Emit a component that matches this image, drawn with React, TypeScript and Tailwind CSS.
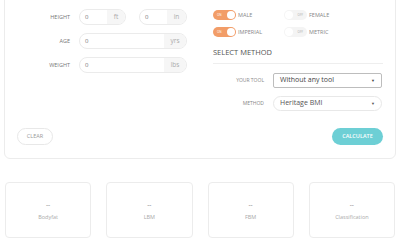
import React from 'react';

function Toggle({ on }: { on: boolean }) {
  if (on) {
    return (
      <div className="relative w-[23px] h-[10px] rounded-full bg-[#f29d68] flex items-center">
        <span className="ml-[4px] text-[3px] text-white leading-none">ON</span>
        <span className="absolute right-[1px] top-[1px] w-[8px] h-[8px] rounded-full bg-white" />
      </div>
    );
  }
  return (
    <div className="relative w-[23px] h-[10px] rounded-full bg-[#f4f4f4] flex items-center justify-end">
      <span className="mr-[4px] text-[3px] text-[#aaa] leading-none">OFF</span>
      <span className="absolute left-[1px] top-[1px] w-[8px] h-[8px] rounded-full bg-white" />
    </div>
  );
}

function AddonInput({ unit, width, addonWidth }: { unit: string; width: string; addonWidth: string }) {
  return (
    <div className={`flex h-[16px] rounded-full border border-[#ebebeb] overflow-hidden ${width}`}>
      <div className="flex-1 flex items-center pl-[5px] text-[6px] text-[#777]">0</div>
      <div className={`flex items-center justify-center bg-[#f6f6f6] text-[6.5px] text-[#aaa] ${addonWidth}`}>{unit}</div>
    </div>
  );
}

function Label({ children }: { children: React.ReactNode }) {
  return <div className="w-[65px] text-right text-[5.5px] text-[#777] uppercase">{children}</div>;
}

function ResultCard({ title }: { title: string }) {
  return (
    <div className="h-[56px] rounded-[4px] border border-[#ececec] flex flex-col items-center justify-center">
      <div className="mt-[2px] text-[6.5px] text-[#888] leading-none">--</div>
      <div className="mt-[7px] text-[5.5px] text-[#aaa] leading-none">{title}</div>
    </div>
  );
}

export default function App() {
  return (
    <div className="w-[400px] h-[240px] bg-white overflow-hidden" style={{ fontFamily: '"Open Sans", sans-serif' }}>
      <div className="mx-[4px] mt-[-10px] h-[169px] border border-[#ececec] rounded-[6px] flex flex-col">
        <div className="flex pt-[18px]">
          <div className="w-[207px] flex flex-col gap-[8px]">
            <div className="flex items-center gap-[9px]">
              <Label>Height</Label>
              <div className="flex gap-[13px]">
                <AddonInput unit="ft" width="w-[47px]" addonWidth="w-[18px]" />
                <AddonInput unit="in" width="w-[48px]" addonWidth="w-[19px]" />
              </div>
            </div>
            <div className="flex items-center gap-[9px]">
              <Label>Age</Label>
              <AddonInput unit="yrs" width="w-[108px]" addonWidth="w-[22px]" />
            </div>
            <div className="flex items-center gap-[9px]">
              <Label>Weight</Label>
              <AddonInput unit="lbs" width="w-[108px]" addonWidth="w-[22px]" />
            </div>
          </div>
          <div className="w-[171px] pt-[1px] pl-[1px]">
            <div className="grid grid-cols-[71px_1fr] gap-y-[7px]">
              <div className="flex items-center gap-[2px]">
                <Toggle on />
                <span className="text-[5.5px] text-[#888]">MALE</span>
              </div>
              <div className="flex items-center gap-[2px]">
                <Toggle on={false} />
                <span className="text-[5.5px] text-[#888]">FEMALE</span>
              </div>
              <div className="flex items-center gap-[2px]">
                <Toggle on />
                <span className="text-[5.5px] text-[#888]">IMPERIAL</span>
              </div>
              <div className="flex items-center gap-[2px]">
                <Toggle on={false} />
                <span className="text-[5.5px] text-[#888]">METRIC</span>
              </div>
            </div>
            <div className="mt-[10px] pb-[6px] border-b border-[#eeeeee] text-[7.5px] text-[#555] leading-[10px]">SELECT METHOD</div>
            <div className="mt-[9px] flex items-center gap-[9px]">
              <div className="w-[51px] text-right text-[5px] text-[#888]">YOUR TOOL</div>
              <div className="w-[109px] h-[15px] border border-[#bdbdbd] rounded-[2px] flex items-center justify-between px-[6px]">
                <span className="text-[7px] text-[#444]">Without any tool</span>
                <span className="text-[4px] text-[#444]">▼</span>
              </div>
            </div>
            <div className="mt-[8px] flex items-center gap-[9px]">
              <div className="w-[51px] text-right text-[5px] text-[#888]">METHOD</div>
              <div className="w-[109px] h-[15px] border border-[#e8e8e8] rounded-full flex items-center justify-between px-[6px]">
                <span className="text-[7px] text-[#555]">Heritage BMI</span>
                <span className="text-[4px] text-[#555]">▼</span>
              </div>
            </div>
          </div>
        </div>
        <div className="mt-auto mb-[13px] flex justify-between px-[12px]">
          <div className="w-[36px] h-[17px] rounded-full border border-[#e8e8e8] flex items-center justify-center text-[5.5px] text-[#999]">CLEAR</div>
          <div className="w-[51px] h-[17px] rounded-full bg-[#6dcfd5] flex items-center justify-center text-[5.5px] text-white font-semibold">CALCULATE</div>
        </div>
      </div>
      <div className="mt-[23px] px-[5px] grid grid-cols-4 gap-[15px]">
        <ResultCard title="Bodyfat" />
        <ResultCard title="LBM" />
        <ResultCard title="FBM" />
        <ResultCard title="Classification" />
      </div>
    </div>
  );
}
